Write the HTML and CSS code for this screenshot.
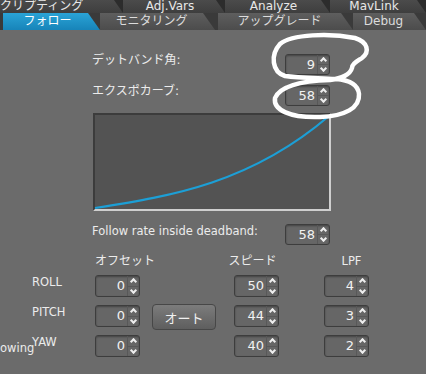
FILE: index.html
```html
<!DOCTYPE html>
<html lang="ja">
<head>
    <meta charset="UTF-8">
    <meta name="viewport" content="width=device-width, initial-scale=1.0">
    <title>フォロー</title>
    <link rel="stylesheet" href="styles.css">
</head>
<body>
    <div class="tabs">
        <div class="tab-row back">
            <div class="tab t1">クリプティング</div>
            <div class="tab t2">Adj.Vars</div>
            <div class="tab t3">Analyze</div>
            <div class="tab t4">MavLink</div>
        </div>
        <div class="tab-row front">
            <div class="tab f1 active">フォロー</div>
            <div class="tab f2">モニタリング</div>
            <div class="tab f3">アップグレード</div>
            <div class="tab f4">Debug</div>
        </div>
    </div>

    <div class="panel">
        <div class="upper">
            <div class="setting">
                <label class="ja">デットバンド角:</label>
                <div class="spin"><span class="val">9</span><span class="arrows"><i class="up"></i><i class="down"></i></span></div>
            </div>
            <div class="setting">
                <label class="ja">エクスポカーブ:</label>
                <div class="spin"><span class="val">58</span><span class="arrows"><i class="up"></i><i class="down"></i></span></div>
            </div>

            <div class="graph">
                <svg viewBox="0 0 234 94" width="234" height="94">
                    <path d="M0,93 C78,80.8 156,67.7 234,1" fill="none" stroke="#1c9fd6" stroke-width="2.2"/>
                </svg>
            </div>

            <div class="setting follow">
                <label>Follow rate inside deadband:</label>
                <div class="spin"><span class="val">58</span><span class="arrows"><i class="up"></i><i class="down"></i></span></div>
            </div>
        </div>

        <div class="axes">
            <div></div>
            <div class="head ja">オフセット</div>
            <div></div>
            <div class="head ja speed">スピード</div>
            <div></div>
            <div class="head lpf">LPF</div>

            <div class="axis">ROLL</div>
            <div class="spin"><span class="val">0</span><span class="arrows"><i class="up"></i><i class="down"></i></span></div>
            <div></div>
            <div class="spin"><span class="val">50</span><span class="arrows"><i class="up"></i><i class="down"></i></span></div>
            <div></div>
            <div class="spin"><span class="val">4</span><span class="arrows"><i class="up"></i><i class="down"></i></span></div>

            <div class="axis">PITCH</div>
            <div class="spin"><span class="val">0</span><span class="arrows"><i class="up"></i><i class="down"></i></span></div>
            <div class="btn-cell"><button class="auto">オート</button></div>
            <div class="spin"><span class="val">44</span><span class="arrows"><i class="up"></i><i class="down"></i></span></div>
            <div></div>
            <div class="spin"><span class="val">3</span><span class="arrows"><i class="up"></i><i class="down"></i></span></div>

            <div class="axis yaw"><span class="owing">owing</span><span>YAW</span></div>
            <div class="spin"><span class="val">0</span><span class="arrows"><i class="up"></i><i class="down"></i></span></div>
            <div></div>
            <div class="spin"><span class="val">40</span><span class="arrows"><i class="up"></i><i class="down"></i></span></div>
            <div></div>
            <div class="spin"><span class="val">2</span><span class="arrows"><i class="up"></i><i class="down"></i></span></div>
        </div>
    </div>

    <!-- hand drawn marks over the two spinboxes -->
    <svg class="scribble" viewBox="0 0 426 374" width="426" height="374">
        <path d="M335,79 C320,78 300,78 285,76 C272,72 270,55 280,44 C292,34 330,33 355,38 C368,42 370,52 362,58 C356,62 352,64 352,68 C350,75 342,78 330,80 C300,81 280,86 275,98 C273,110 290,118 320,117 C345,116 360,108 359,94 C358,84 348,80 336,79"
              fill="none" stroke="#fff" stroke-width="4.5" stroke-linecap="round" stroke-linejoin="round"/>
    </svg>
</body>
</html>
```

FILE: styles.css
```css
body {
    margin: 0;
    background-color: #6b6b6b;
    color: #ececec;
    font-family: "DejaVu Sans", "Noto Sans CJK JP", sans-serif;
    font-size: 11.5px;
    width: 426px;
    height: 374px;
    overflow: hidden;
    position: relative;
}

.ja {
    font-size: 12px;
}

/* tabs */
.tabs {
    height: 30px;
}

.tab-row {
    display: flex;
}

.tab {
    flex: none;
    white-space: nowrap;
    text-align: center;
    color: #dcdcdc;
    font-size: 12px;
}

.back {
    height: 13px;
    background: #2c2c2c;
}

.back .tab {
    height: 13px;
    line-height: 12px;
    background: linear-gradient(#4b4b4b, #3e3e3e);
    clip-path: polygon(0 0, calc(100% - 9px) 0, 100% 100%, 0 100%);
    padding-right: 8px;
    box-sizing: border-box;
    color: #e8e8e8;
}

.t1 { width: 123px; text-align: left !important; }
.t2 { width: 102px; }
.t3 { width: 105px; }
.t4 { width: 96px; }

.front {
    height: 17px;
    background: #3a3a3a;
}

.front .tab {
    height: 17px;
    line-height: 17px;
    background: linear-gradient(#5e5e5e, #4c4c4c);
    clip-path: polygon(0 0, calc(100% - 12px) 0, 100% 100%, 0 100%);
    padding-right: 12px;
    box-sizing: border-box;
}

.front .tab.active {
    background: linear-gradient(#2aa3d6, #1784b9);
    color: #fff;
    padding-right: 8px;
}

.f1 { width: 97px; margin-left: 3px; }
.f2 { width: 115px; }
.f3 { width: 135px; margin-left: 3px; }
.f4 { width: 73px; }

/* main panel */
.panel {
    padding-top: 24px;
}

.upper {
    margin-left: 92px;
    width: 238px;
}

.setting {
    display: flex;
    justify-content: space-between;
    align-items: flex-start;
    margin-bottom: 10px;
}

.setting label {
    line-height: 12px;
}

.setting.follow {
    margin-top: 13px;
}

.setting.follow label {
    padding-top: 1px;
}

.graph {
    margin-top: -3px;
    margin-left: 1px;
    width: 234px;
    height: 94px;
    background: #535353;
    border-top: 2px solid #3c3c3c;
    border-left: 2px solid #3c3c3c;
    border-right: 2px solid #cfcfcf;
    border-bottom: 2px solid #cfcfcf;
}

.graph svg {
    display: block;
    overflow: visible;
}

/* spin boxes */
.spin {
    width: 45px;
    height: 21px;
    box-sizing: border-box;
    display: flex;
    background: #666;
    border: 1px solid #3d3d3d;
    border-radius: 3px;
    box-shadow: inset 0 1px 2px rgba(0, 0, 0, 0.35);
}

.spin .val {
    flex: 1;
    text-align: right;
    font-size: 13px;
    line-height: 20px;
    padding-right: 2px;
    color: #f2f2f2;
}

.spin .arrows {
    width: 11px;
    display: flex;
    flex-direction: column;
    border-left: 1px solid #585858;
}

.spin .arrows i {
    flex: 1;
    position: relative;
}

.spin .arrows i.up {
    border-bottom: 1px solid #585858;
}

.spin .arrows i::after {
    content: "";
    position: absolute;
    left: 3px;
    width: 3px;
    height: 3px;
    border-top: 2px solid #eee;
    border-left: 2px solid #eee;
}

.spin .arrows i.up::after {
    top: 3px;
    transform: rotate(45deg);
}

.spin .arrows i.down::after {
    top: 1px;
    transform: rotate(225deg);
}

/* axis grid */
.axes {
    margin-top: 8px;
    display: grid;
    grid-template-columns: 95px 45px 94px 45px 45px 45px;
    grid-template-rows: 12px 22px 22px 22px;
    row-gap: 8px;
}

.axes .spin {
    height: 22px;
}

.head {
    text-align: center;
    line-height: 12px;
    white-space: nowrap;
}

.head.speed {
    margin-left: -8px;
}

.head.lpf {
    padding-left: 10px;
}

.axis {
    padding-left: 32px;
    line-height: 14px;
}

.axis.yaw {
    padding-left: 0;
    display: flex;
}

.owing {
    width: 32px;
    flex: none;
    margin-top: 6px;
}

.btn-cell {
    padding-left: 12px;
}

.auto {
    width: 64px;
    height: 26px;
    margin-top: -1px;
    font-family: "DejaVu Sans", "Noto Sans CJK JP", sans-serif;
    font-size: 13px;
    color: #f0f0f0;
    background: linear-gradient(#7c7c7c, #5e5e5e);
    border: 1px solid #474747;
    border-radius: 4px;
    padding: 0;
}

.scribble {
    position: absolute;
    left: 0;
    top: 0;
    pointer-events: none;
}
```
